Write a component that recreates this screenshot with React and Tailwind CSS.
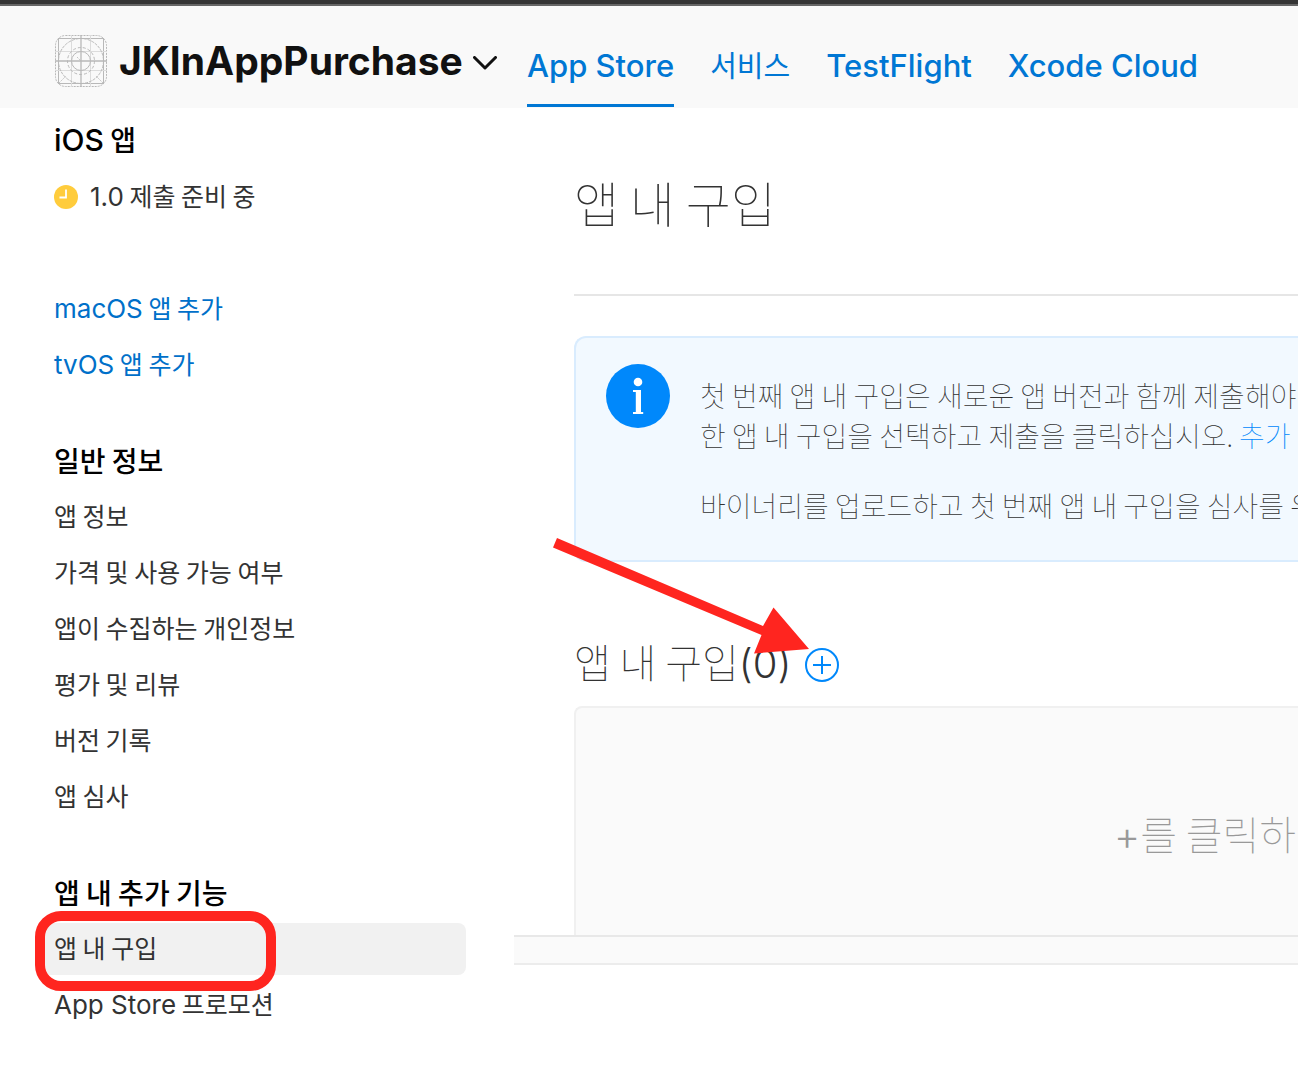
const sections = [
  {
    title: '일반 정보',
    items: ['앱 정보', '가격 및 사용 가능 여부', '앱이 수집하는 개인정보', '평가 및 리뷰', '버전 기록', '앱 심사'],
  },
  { title: '앱 내 추가 기능', items: ['앱 내 구입', <><Latin>App Store</Latin> 프로모션</>] },
]

const tabs = ['App Store', '서비스', 'TestFlight', 'Xcode Cloud']

function Latin({ children }) {
  return <span className="font-['Inter'] text-[26px]">{children}</span>
}

const AppIcon = () => (
  <svg viewBox="0 0 52 52" className="size-13 shrink-0" fill="none" stroke="#b8b8b8">
    <rect x="0.5" y="0.5" width="51" height="51" rx="10" strokeDasharray="2 1" />
    <rect x="3.5" y="3.5" width="45" height="45" />
    <path d="M26 0v52M0 26h52" strokeWidth="1.3" />
    <path d="M16.5 0v52M35.5 0v52M0 16.5h52M0 35.5h52" stroke="#dcdcdc" />
    <path d="M22 22l4 4M4 48l7-7M48 48l-7-7" strokeWidth="0.8" strokeDasharray="2 1" />
    <circle cx="26" cy="26" r="22.5" strokeDasharray="3 1" />
    <circle cx="26" cy="26" r="13.5" strokeDasharray="3 2" />
    <circle cx="26" cy="26" r="9.5" />
  </svg>
)

const NavHeading = ({ children }) => (
  <h2 className="flex h-13 items-center px-3 pb-0.5 text-[28px] font-medium text-black">
    <span>{children}</span>
  </h2>
)

const NavItem = ({ children, active, link }) => (
  <a
    href="#"
    className={`relative flex h-13 items-center whitespace-nowrap rounded-lg px-3 pb-0.5 text-[25px] ${
      link ? 'text-[#0070c9]' : 'text-[#333]'
    } ${active ? 'bg-[#f1f1f1]' : ''}`}
  >
    {children}
    {active && (
      <span className="absolute -left-[7px] -top-3 z-10 h-20 w-[241px] rounded-[26px] border-10 border-[#ff251f]" />
    )}
  </a>
)

function Header() {
  return (
    <header className="flex h-27 items-stretch border-t-4 border-[#353535] bg-[#f9f9f9] font-['Inter','Noto_Sans_CJK_KR',sans-serif]">
      <div className="flex flex-1 border-t-2 border-[#666] pl-[55px]">
        <button type="button" className="flex w-[472px] shrink-0 items-center gap-3 whitespace-nowrap pt-2 text-[39px] font-bold text-[#111]">
          <AppIcon />
          <span className="flex items-center gap-2.5">
            JKInAppPurchase
            <svg viewBox="0 0 24 14" className="mt-1 h-3.5 w-6" fill="none" stroke="#111" strokeWidth="3" strokeLinecap="round" strokeLinejoin="round">
              <path d="M1.5 1.5L12 12L22.5 1.5" />
            </svg>
          </span>
        </button>
        <nav className="flex gap-9 pb-px">
          {tabs.map((tab, i) => (
            <a
              key={tab}
              href="#"
              className={`flex items-center whitespace-nowrap border-b-3 pt-[23px] text-[#0077d4] ${
                tab === '서비스' ? 'text-[29px] font-normal' : 'text-[31px] font-medium'
              } ${i === 0 ? 'border-[#0077d4]' : 'border-transparent'}`}
            >
              {tab}
            </a>
          ))}
        </nav>
      </div>
    </header>
  )
}

function Sidebar() {
  return (
    <aside className="w-[514px] shrink-0 pt-[7px] pr-12 pb-10 pl-[42px]">
      <div className="mb-11 flex flex-col gap-1">
        <NavHeading><span className="font-['Inter'] text-[30px]">iOS</span> 앱</NavHeading>
        <NavItem>
          <svg viewBox="0 0 24 24" className="mt-0.5 mr-3 size-6" fill="none">
            <circle cx="12" cy="12" r="12" fill="#ffcc3c" />
            <path d="M12 4.5v8H5.5" stroke="#fff" strokeWidth="1.8" />
          </svg>
          <span><Latin>1.0</Latin> 제출 준비 중</span>
        </NavItem>
        <div className="mt-14 flex flex-col gap-1">
          <NavItem link><span><Latin>macOS</Latin> 앱 추가</span></NavItem>
          <NavItem link><span><Latin>tvOS</Latin> 앱 추가</span></NavItem>
        </div>
      </div>
      {sections.map((section) => (
        <div key={section.title} className="mb-11 flex flex-col gap-1">
          <NavHeading>{section.title}</NavHeading>
          {section.items.map((item, i) => (
            <NavItem key={i} active={item === '앱 내 구입'}><span>{item}</span></NavItem>
          ))}
        </div>
      ))}
    </aside>
  )
}

function InfoBanner() {
  return (
    <div className="mt-10 flex h-[226px] gap-[30px] rounded-l-xl border-2 border-r-0 border-[#d9ecfe] bg-[#f2f9ff] pt-[26px] pl-[30px]">
      <svg viewBox="0 0 64 64" className="size-16 shrink-0">
        <circle cx="32" cy="32" r="32" fill="#0088fb" />
        <circle cx="32" cy="18" r="4.3" fill="#fff" />
        <path d="M27 26h8v22h2.2v2H27v-2h2.8V28H27z" fill="#fff" />
      </svg>
      <div className="pt-[11px] text-[28px] leading-10 font-thin whitespace-nowrap text-[#333]">
        <p>
          첫 번째 앱 내 구입은 새로운 앱 버전과 함께 제출해야
          <br />
          한 앱 내 구입을 선택하고 제출을 클릭하십시오. <a href="#" className="text-[#0088fb]">추가</a>
        </p>
        <p className="mt-[30px]">바이너리를 업로드하고 첫 번째 앱 내 구입을 심사를 위</p>
      </div>
    </div>
  )
}

export default function App() {
  return (
    <div className="min-h-screen overflow-hidden bg-white font-['Noto_Sans_CJK_KR','Inter',sans-serif]">
      <Header />
      <div className="flex">
        <Sidebar />
        <main className="min-w-0 flex-1">
          <div className="pl-[60px]">
            <h1 className="flex h-[188px] items-center border-b-2 border-[#e6e6e6] pt-0.5 text-[49px] font-thin text-[#333]">앱 내 구입</h1>
            <InfoBanner />
            <div className="relative flex h-36 items-end pb-4">
              <h2 className="text-[40px] leading-[52px] font-thin text-[#333]">
                앱 내 구입<span className="font-['Inter'] font-light">(0)</span>
              </h2>
              <button type="button" aria-label="앱 내 구입 추가" className="mb-2 ml-3.5">
                <svg viewBox="0 0 34 34" className="size-[34px]" fill="none" stroke="#0088fb" strokeWidth="2">
                  <circle cx="17" cy="17" r="16" />
                  <path d="M17 8v18M8 17h18" />
                </svg>
              </button>
              <svg viewBox="0 0 260 120" className="absolute -top-6 -left-[22px] h-[120px] w-[260px]" fill="#ff251f">
                <path d="M5 0L211 88L221.5 69.5L257 111L202 115.5L209.5 97L1 9.5z" />
              </svg>
            </div>
            <div className="h-[229px] overflow-hidden rounded-tl-lg border-t-2 border-l-2 border-[#f0f0f0] bg-[#fafafa] pt-[95px] pl-[538px] text-[40px] leading-[60px] font-thin whitespace-nowrap text-[#999]">
              <span className="font-['Inter'] font-light">+</span>를 클릭하
            </div>
          </div>
          <div className="h-[30px] border-t-2 border-b-2 border-t-[#e8e8e8] border-b-[#ececec] bg-[#fafafa]" />
        </main>
      </div>
    </div>
  )
}
